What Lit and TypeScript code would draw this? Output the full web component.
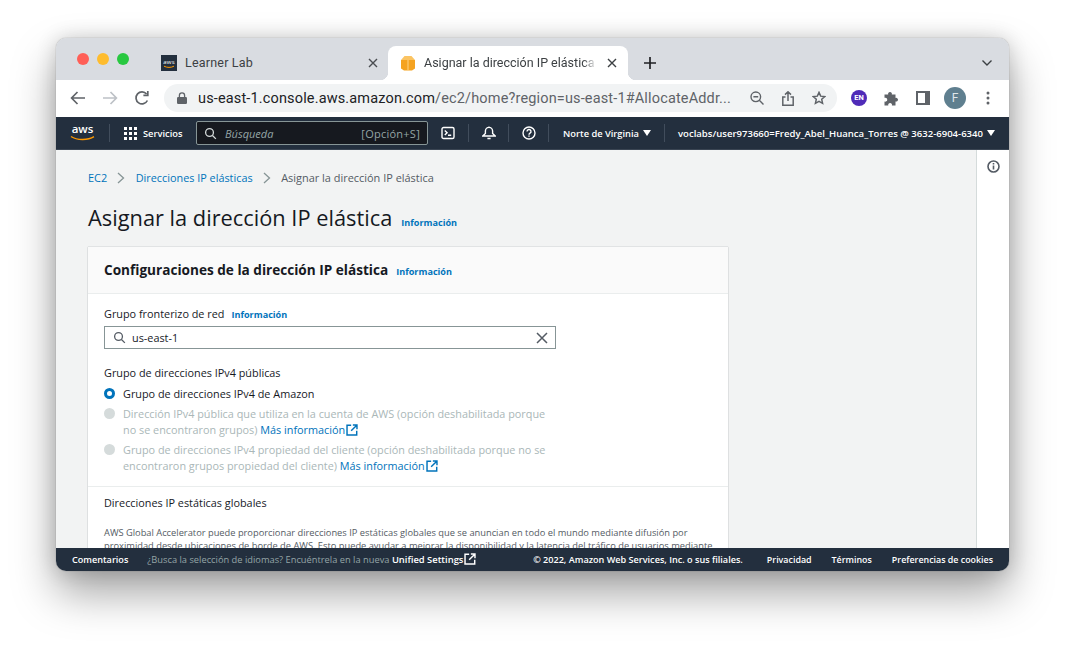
import { LitElement, html, css, svg } from "lit";
import { customElement } from "lit/decorators.js";

const extIcon = (color: string) => html`<svg class="ext" width="14" height="14" viewBox="0 0 14 14" fill="none" stroke=${color} stroke-width="1.7"><path d="M6 1.5H1.2v11.3h11.3V8"/><path d="M8 1.2h4.8V6M12.6 1.4 6 8"/></svg>`;

const searchIcon = (color: string, s = 16) => html`<svg width=${s} height=${s} viewBox="0 0 16 16" fill="none" stroke=${color} stroke-width="1.6"><circle cx="6.8" cy="6.8" r="4.8"/><path d="m10.4 10.4 4.2 4.2"/></svg>`;

const caret = svg`<path d="M0 0h8L4 6z" fill="#fff"/>`;

@customElement("app-root")
export class AppRoot extends LitElement {
  static styles = css`
    :host {
      display: block;
      width: 1065px;
      height: 645px;
      overflow: hidden;
      background: #fff;
      font-family: "Open Sans", "Liberation Sans", sans-serif;
    }
    * { box-sizing: border-box; }
    .page { padding: 38px 56px 74px; height: 645px; }
    .window {
      width: 953px;
      height: 533px;
      border-radius: 10px;
      overflow: hidden;
      display: flex;
      flex-direction: column;
      box-shadow: 0 0 1px rgba(0,0,0,.5), 0 0 20px rgba(0,0,0,.16), 0 22px 44px rgba(0,0,0,.36);
    }

    /* tab strip */
    .tabs {
      height: 42px;
      flex: none;
      background: #d9dce1;
      display: flex;
      padding-top: 8px;
      font-family: Roboto, sans-serif;
      font-size: 12.5px;
      letter-spacing: .2px;
      color: #3c4043;
    }
    .lights { display: flex; gap: 8px; padding: 7px 0 0 21px; width: 105px; flex: none; }
    .lights i { width: 12px; height: 12px; border-radius: 50%; }
    .tab { width: 227px; height: 34px; display: flex; align-items: center; flex: none; position: relative; padding-bottom: 1px; }
    .tab .name { margin-left: 8px; flex: 1; white-space: nowrap; overflow: hidden; line-height: 16px; }
    .tab .x { margin-right: 10px; margin-left: 4px; flex: none; }
    .tab.on { width: 240px; background: #fff; border-radius: 8px 8px 0 0; padding-left: 12px; letter-spacing: 0; }
    .tab.on .x { margin-right: 11px; margin-left: 10px; }
    .tab.on .name { mask-image: linear-gradient(to left, transparent 0, #000 14px); -webkit-mask-image: linear-gradient(to left, transparent 0, #000 14px); }
    .tab.on::before, .tab.on::after { content: ""; position: absolute; bottom: 0; width: 8px; height: 8px; }
    .tab.on::before { left: -8px; background: radial-gradient(circle at 0 0, transparent 8px, #fff 8.5px); }
    .tab.on::after { right: -8px; background: radial-gradient(circle at 100% 0, transparent 8px, #fff 8.5px); }
    .plus { margin-left: 15px; width: 14px; height: 34px; display: flex; align-items: center; }
    .chev { margin-left: auto; margin-right: 17px; height: 34px; display: flex; align-items: center; }

    /* address bar */
    .toolbar { height: 37px; flex: none; background: #fff; display: flex; align-items: center; padding: 0 0 1px 14px; }
    .nav-btns { display: flex; gap: 16px; width: 94px; flex: none; align-items: center; }
    .omni {
      width: 673px;
      height: 28px;
      flex: none;
      border-radius: 14px;
      background: #f1f3f4;
      display: flex;
      align-items: center;
      padding: 0 11px 0 13px;
      font-family: Roboto, sans-serif;
      font-size: 14.5px;
      letter-spacing: .15px;
      color: #5f6368;
      white-space: nowrap;
    }
    .omni b { font-weight: 400; color: #202124; }
    .omni .url { margin-left: 11px; flex: 1; overflow: hidden; }
    .omni .acts { display: flex; gap: 18px; align-items: center; }
    .ext-icons { display: flex; align-items: center; padding-left: 14px; }
    .en { width: 16px; height: 16px; border-radius: 50%; background: #4f2bb8; color: #fff; font: 700 7.5px/16px Roboto, sans-serif; text-align: center; }
    .avatar { width: 22px; height: 22px; border-radius: 50%; background: #5f7f8f; color: #dfe7ea; font: 400 12px/22px Roboto, sans-serif; text-align: center; }

    /* aws console nav */
    .awsnav {
      height: 33px;
      flex: none;
      background: #232f3e;
      border-bottom: 1px solid #3a4553;
      display: flex;
      align-items: center;
      color: #fff;
      font-size: 9.3px;
      font-weight: 600;
      white-space: nowrap;
    }
    .logo { width: 40px; margin-left: 14px; flex: none; line-height: 0; margin-right: -1px; }
    .sep { width: 1px; height: 18px; background: #414d5c; flex: none; }
    .services { display: flex; align-items: center; gap: 6px; margin-left: 14px; width: 72px; flex: none; }
    .search {
      width: 232px;
      height: 24px;
      flex: none;
      background: #16191f;
      border: 1px solid #879596;
      border-radius: 2px;
      display: flex;
      align-items: center;
      padding: 0 7px 0 7px;
      color: #95a5a6;
      font-weight: 400;
      font-size: 11px;
    }
    .search em { margin-left: 8px; flex: 1; }
    .search span { letter-spacing: .25px; }
    .nicon { width: 39px; display: flex; justify-content: center; flex: none; }
    .nicon.first { width: 40px; }
    .region { display: flex; align-items: center; gap: 4px; width: 115px; padding-left: 14px; flex: none; }
    .acct { display: flex; align-items: center; gap: 4px; padding-left: 13px; font-size: 9.55px; }

    /* console content */
    .body { flex: 1; min-height: 0; display: flex; background: #f2f3f3; overflow: hidden; color: #16191f; }
    .main { flex: 1; padding: 21px 0 0 32px; min-width: 0; }
    .rail { width: 33px; flex: none; background: #fff; border-left: 1px solid #d5dbdb; display: flex; justify-content: center; padding-top: 10px; }
    .crumbs { display: flex; align-items: center; font-size: 10.95px; line-height: 14px; color: #545b64; }
    a { color: #0073bb; text-decoration: none; }
    .crumbs svg { margin: 0 10.5px 0 10px; }
    .crumbs a.mid { font-size: 10.85px; }
    .title { display: flex; align-items: baseline; margin-top: 17px; }
    h1 { margin: 0; font-size: 21.8px; font-weight: 400; line-height: 32px; }
    .info { font-size: 9.1px; font-weight: 700; color: #0073bb; margin-left: 9px; }
    .card { width: 640px; margin-top: 13px; background: #fff; box-shadow: 0 0 1px 0 rgba(0,28,36,.4), 0 1px 1px 0 rgba(0,28,36,.1); }
    .card-head { height: 47px; background: #fafafa; border-bottom: 1px solid #eaeded; display: flex; align-items: baseline; padding: 14px 16px 0; }
    .card-head .info { margin-left: 8px; }
    h2 { margin: 0; font-size: 13.6px; line-height: 18px; font-weight: 700; }
    .sect { padding: 12px 16px 12px; border-bottom: 1px solid #eaeded; font-size: 10.85px; }
    .lab { line-height: 15px; display: flex; align-items: baseline; color: #16191f; }
    .lab .info { margin-left: 7px; }
    .field { width: 452px; height: 23px; margin-top: 4px; border: 1px solid #879596; background: #fff; display: flex; align-items: center; padding: 0 7px 0 8px; color: #16191f; }
    .field span { margin-left: 6px; flex: 1; }
    .lab.pool { margin-top: 16px; }
    .radio { display: flex; line-height: 16px; margin-top: 4px; width: 470px; color: #aab7b8; white-space: nowrap; }
    .radio.on { color: #16191f; margin-top: 6px; }
    .dot { width: 11px; height: 11px; border-radius: 50%; background: #d5dbdb; flex: none; margin: 2px 8px 0 0; }
    .radio.on .dot { background: #fff; border: 3.5px solid #0073bb; }
    .ext { vertical-align: -2px; margin-left: 1px; width: 12px; height: 12px; }
    .global { padding: 8px 16px 0; font-size: 10.85px; }
    .global p { margin: 17px 0 0; width: 612px; font-size: 9.3px; line-height: 12.5px; color: #545b64; }

    /* footer */
    .foot {
      height: 23px;
      flex: none;
      background: #232f3e;
      display: flex;
      align-items: center;
      color: #fff;
      font-size: 9.1px;
      font-weight: 600;
      padding: 0 16px;
      white-space: nowrap;
    }
    .foot .lang { margin-left: 19px; color: #95a5a6; font-weight: 400; font-size: 9.3px; }
    .foot .lang b { color: #fff; font-weight: 600; font-size: 9.4px; }
    .foot .right { margin-left: auto; display: flex; gap: 20px; font-size: 8.9px; }
    .foot .right span:first-child { margin-right: 4px; font-size: 9.1px; }
  `;

  render() {
    return html`
      <div class="page">
        <div class="window">
          <div class="tabs">
            <div class="lights">
              <i style="background:#ff5f57"></i><i style="background:#febc2e"></i><i style="background:#28c840"></i>
            </div>
            <div class="tab first">
              <svg width="16" height="16" viewBox="0 0 16 16"><rect width="16" height="16" fill="#232f3e"/><path d="M3 11.2c3 1.6 7 1.6 10 0" stroke="#f90" fill="none"/><text x="8" y="9" font-size="6" font-family="Open Sans" fill="#fff" text-anchor="middle">aws</text></svg>
              <span class="name">Learner Lab</span>
              <svg class="x" width="10" height="10" viewBox="0 0 10 10" stroke="#4a4d51" stroke-width="1.4"><path d="m1 1 8 8M9 1 1 9"/></svg>
            </div>
            <div class="tab on">
              <svg width="16" height="16" viewBox="0 0 16 16" style="flex:none"><path d="M1 5v8.6L4 15.5h8l3-1.9V5z" fill="#f5a321"/><path d="M1 5 4.5 1h7L15 5z" fill="#fbc463"/><path d="M8 5v10.5" stroke="#fcd48a" stroke-width="1"/></svg>
              <span class="name">Asignar la dirección IP elástica</span>
              <svg class="x" width="10" height="10" viewBox="0 0 10 10" stroke="#3c4043" stroke-width="1.4"><path d="m1 1 8 8M9 1 1 9"/></svg>
            </div>
            <div class="plus"><svg width="14" height="14" viewBox="0 0 14 14" stroke="#202124" stroke-width="1.7"><path d="M7 1v12M1 7h12"/></svg></div>
            <div class="chev"><svg width="10" height="6" viewBox="0 0 10 6" fill="none" stroke="#3c4043" stroke-width="1.4"><path d="m.5.5 4.5 4.5L9.5.5"/></svg></div>
          </div>

          <div class="toolbar">
            <div class="nav-btns">
              <svg width="16" height="14" viewBox="0 0 16 14" fill="none" stroke="#5f6368" stroke-width="1.7"><path d="M15 7H2M7.5 1 1.6 7l5.9 6"/></svg>
              <svg width="16" height="14" viewBox="0 0 16 14" fill="none" stroke="#bdc1c6" stroke-width="1.7"><path d="M1 7h13M8.5 1l5.9 6-5.9 6"/></svg>
              <svg width="16" height="16" viewBox="0 0 16 16" fill="none" stroke="#5f6368" stroke-width="1.7"><path d="M13.4 10.5A6 6 0 1 1 12.6 4"/><path d="M13.8 1v4.4H9.4" /></svg>
            </div>
            <div class="omni">
              <svg width="10" height="12" viewBox="0 0 10 12"><rect y="5" width="10" height="7" rx="1.2" fill="#5f6368"/><path d="M2.4 5.5V3.4a2.6 2.6 0 0 1 5.2 0v2.1" fill="none" stroke="#5f6368" stroke-width="1.3"/></svg>
              <span class="url"><b>us-east-1.console.aws.amazon.com</b>/ec2/home?region=us-east-1#AllocateAddr...</span>
              <span class="acts">
                <svg width="14" height="14" viewBox="0 0 14 14" fill="none" stroke="#5f6368" stroke-width="1.4"><circle cx="5.8" cy="5.8" r="4.8"/><path d="m9.3 9.3 4.2 4.2M3.4 5.8h4.8"/></svg>
                <svg width="12" height="15" viewBox="0 0 12 15" fill="none" stroke="#5f6368" stroke-width="1.5"><path d="M3.5 6H.8v8.2h10.4V6H8.5M6 10V1M3 3.6 6 .8l3 2.8"/></svg>
                <svg width="14" height="14" viewBox="0 0 16 16" fill="none" stroke="#5f6368" stroke-width="1.7"><path d="m8 1.6 1.9 4.3 4.7.5-3.5 3.1 1 4.6L8 11.8l-4.1 2.3 1-4.6-3.5-3.1 4.7-.5z"/></svg>
              </span>
            </div>
            <div class="ext-icons">
              <div class="en">EN</div>
              <svg style="margin-left:17px" width="15" height="15" viewBox="0 0 15 15" fill="#5f6368"><path d="M.5 3.5h3.7a1.9 1.9 0 1 1 3.6 0h3.7v3.4a1.9 1.9 0 1 1 0 3.6V14.5H7.9a1.9 1.9 0 1 0-3.6 0H.5v-4a2 2 0 1 0 0-3.7z"/></svg>
              <svg style="margin-left:17px" width="14" height="14" viewBox="0 0 14 14"><rect x="1" y="1" width="12" height="12" fill="none" stroke="#5f6368" stroke-width="2"/><rect x="9" y="1" width="4" height="12" fill="#5f6368"/></svg>
              <div class="avatar" style="margin-left:14px">F</div>
              <svg style="margin-left:20px" width="4" height="14" viewBox="0 0 4 14" fill="#5f6368"><circle cx="2" cy="2" r="1.5"/><circle cx="2" cy="7" r="1.5"/><circle cx="2" cy="12" r="1.5"/></svg>
            </div>
          </div>

          <div class="awsnav">
            <div class="logo">
              <svg width="26" height="24" viewBox="0 0 26 24"><text x="12.5" y="12" font-size="11.5" font-family="Open Sans" fill="#fff" text-anchor="middle">aws</text><path d="M1 15.5c6 4 17 4 23 .2" stroke="#f90" stroke-width="1.4" fill="none"/></svg>
            </div>
            <div class="sep"></div>
            <div class="services">
              <svg width="13" height="13" viewBox="0 0 13 13" fill="#fff"><rect width="3" height="3"/><rect x="5" width="3" height="3"/><rect x="10" width="3" height="3"/><rect y="5" width="3" height="3"/><rect x="5" y="5" width="3" height="3"/><rect x="10" y="5" width="3" height="3"/><rect y="10" width="3" height="3"/><rect x="5" y="10" width="3" height="3"/><rect x="10" y="10" width="3" height="3"/></svg>
              Servicios
            </div>
            <div class="search">
              ${searchIcon("#d5dbdb", 13)}
              <em>Búsqueda</em>
              <span>[Opción+S]</span>
            </div>
            <div class="nicon first">
              <svg width="14" height="14" viewBox="0 0 14 14" fill="none" stroke="#fff" stroke-width="1.4"><rect x="1" y="1.5" width="12" height="11" rx="1.6"/><path d="m3.8 4.5 2.3 2.2L3.8 9M7 9.2h3.2"/></svg>
            </div>
            <div class="sep"></div>
            <div class="nicon">
              <svg width="14" height="14" viewBox="0 0 14 14" fill="none" stroke="#fff" stroke-width="1.4"><path d="M.8 10h12.4L10.6 7.4V5a3.6 3.6 0 0 0-7.2 0v2.4zM5.4 12.5h3.2M7 .4v1"/></svg>
            </div>
            <div class="sep"></div>
            <div class="nicon">
              <svg width="14" height="14" viewBox="0 0 14 14" fill="none" stroke="#fff" stroke-width="1.4"><circle cx="7" cy="7" r="6"/><path d="M5 5.5a2 2 0 1 1 3 1.7c-.7.4-1 .8-1 1.5M7 9.6v1.2"/></svg>
            </div>
            <div class="sep"></div>
            <div class="region">Norte de Virginia <svg width="8" height="6" viewBox="0 0 8 6">${caret}</svg></div>
            <div class="sep"></div>
            <div class="acct">voclabs/user973660=Fredy_Abel_Huanca_Torres @ 3632-6904-6340 <svg width="8" height="6" viewBox="0 0 8 6">${caret}</svg></div>
          </div>

          <div class="body">
            <div class="main">
              <div class="crumbs">
                <a>EC2</a>
                <svg width="8" height="12" viewBox="0 0 8 12" fill="none" stroke="#879596" stroke-width="1.3"><path d="m1 1 5.5 5L1 11"/></svg>
                <a class="mid">Direcciones IP elásticas</a>
                <svg width="8" height="12" viewBox="0 0 8 12" fill="none" stroke="#879596" stroke-width="1.3"><path d="m1 1 5.5 5L1 11"/></svg>
                <span>Asignar la dirección IP elástica</span>
              </div>
              <div class="title"><h1>Asignar la dirección IP elástica</h1><a class="info">Información</a></div>
              <div class="card">
                <div class="card-head"><h2>Configuraciones de la dirección IP elástica</h2><a class="info">Información</a></div>
                <div class="sect">
                  <div class="lab">Grupo fronterizo de red <a class="info">Información</a></div>
                  <div class="field">
                    ${searchIcon("#545b64", 13)}
                    <span>us-east-1</span>
                    <svg width="12" height="12" viewBox="0 0 12 12" stroke="#545b64" stroke-width="1.5"><path d="m1 1 10 10M11 1 1 11"/></svg>
                  </div>
                  <div class="lab pool">Grupo de direcciones IPv4 públicas</div>
                  <div class="radio on"><i class="dot"></i><div>Grupo de direcciones IPv4 de Amazon</div></div>
                  <div class="radio"><i class="dot"></i><div>Dirección IPv4 pública que utiliza en la cuenta de AWS (opción deshabilitada porque<br>no se encontraron grupos) <a>Más información${extIcon("#0073bb")}</a></div></div>
                  <div class="radio"><i class="dot"></i><div>Grupo de direcciones IPv4 propiedad del cliente (opción deshabilitada porque no se<br>encontraron grupos propiedad del cliente) <a>Más información${extIcon("#0073bb")}</a></div></div>
                </div>
                <div class="global">
                  <div class="lab">Direcciones IP estáticas globales</div>
                  <p>AWS Global Accelerator puede proporcionar direcciones IP estáticas globales que se anuncian en todo el mundo mediante difusión por proximidad desde ubicaciones de borde de AWS. Esto puede ayudar a mejorar la disponibilidad y la latencia del tráfico de usuarios mediante la red global de AWS.</p>
                </div>
              </div>
            </div>
            <div class="rail">
              <svg width="13" height="13" viewBox="0 0 13 13" fill="none" stroke="#545b64" stroke-width="1.6"><circle cx="6.5" cy="6.5" r="5.5"/><path d="M6.5 5.6v4M6.5 3v1.6"/></svg>
            </div>
          </div>

          <div class="foot">
            <span>Comentarios</span>
            <span class="lang">¿Busca la selección de idiomas? Encuéntrela en la nueva <b>Unified Settings</b>${extIcon("#fff")}</span>
            <div class="right">
              <span>© 2022, Amazon Web Services, Inc. o sus filiales.</span>
              <span>Privacidad</span><span>Términos</span><span>Preferencias de cookies</span>
            </div>
          </div>
        </div>
      </div>
    `;
  }
}
